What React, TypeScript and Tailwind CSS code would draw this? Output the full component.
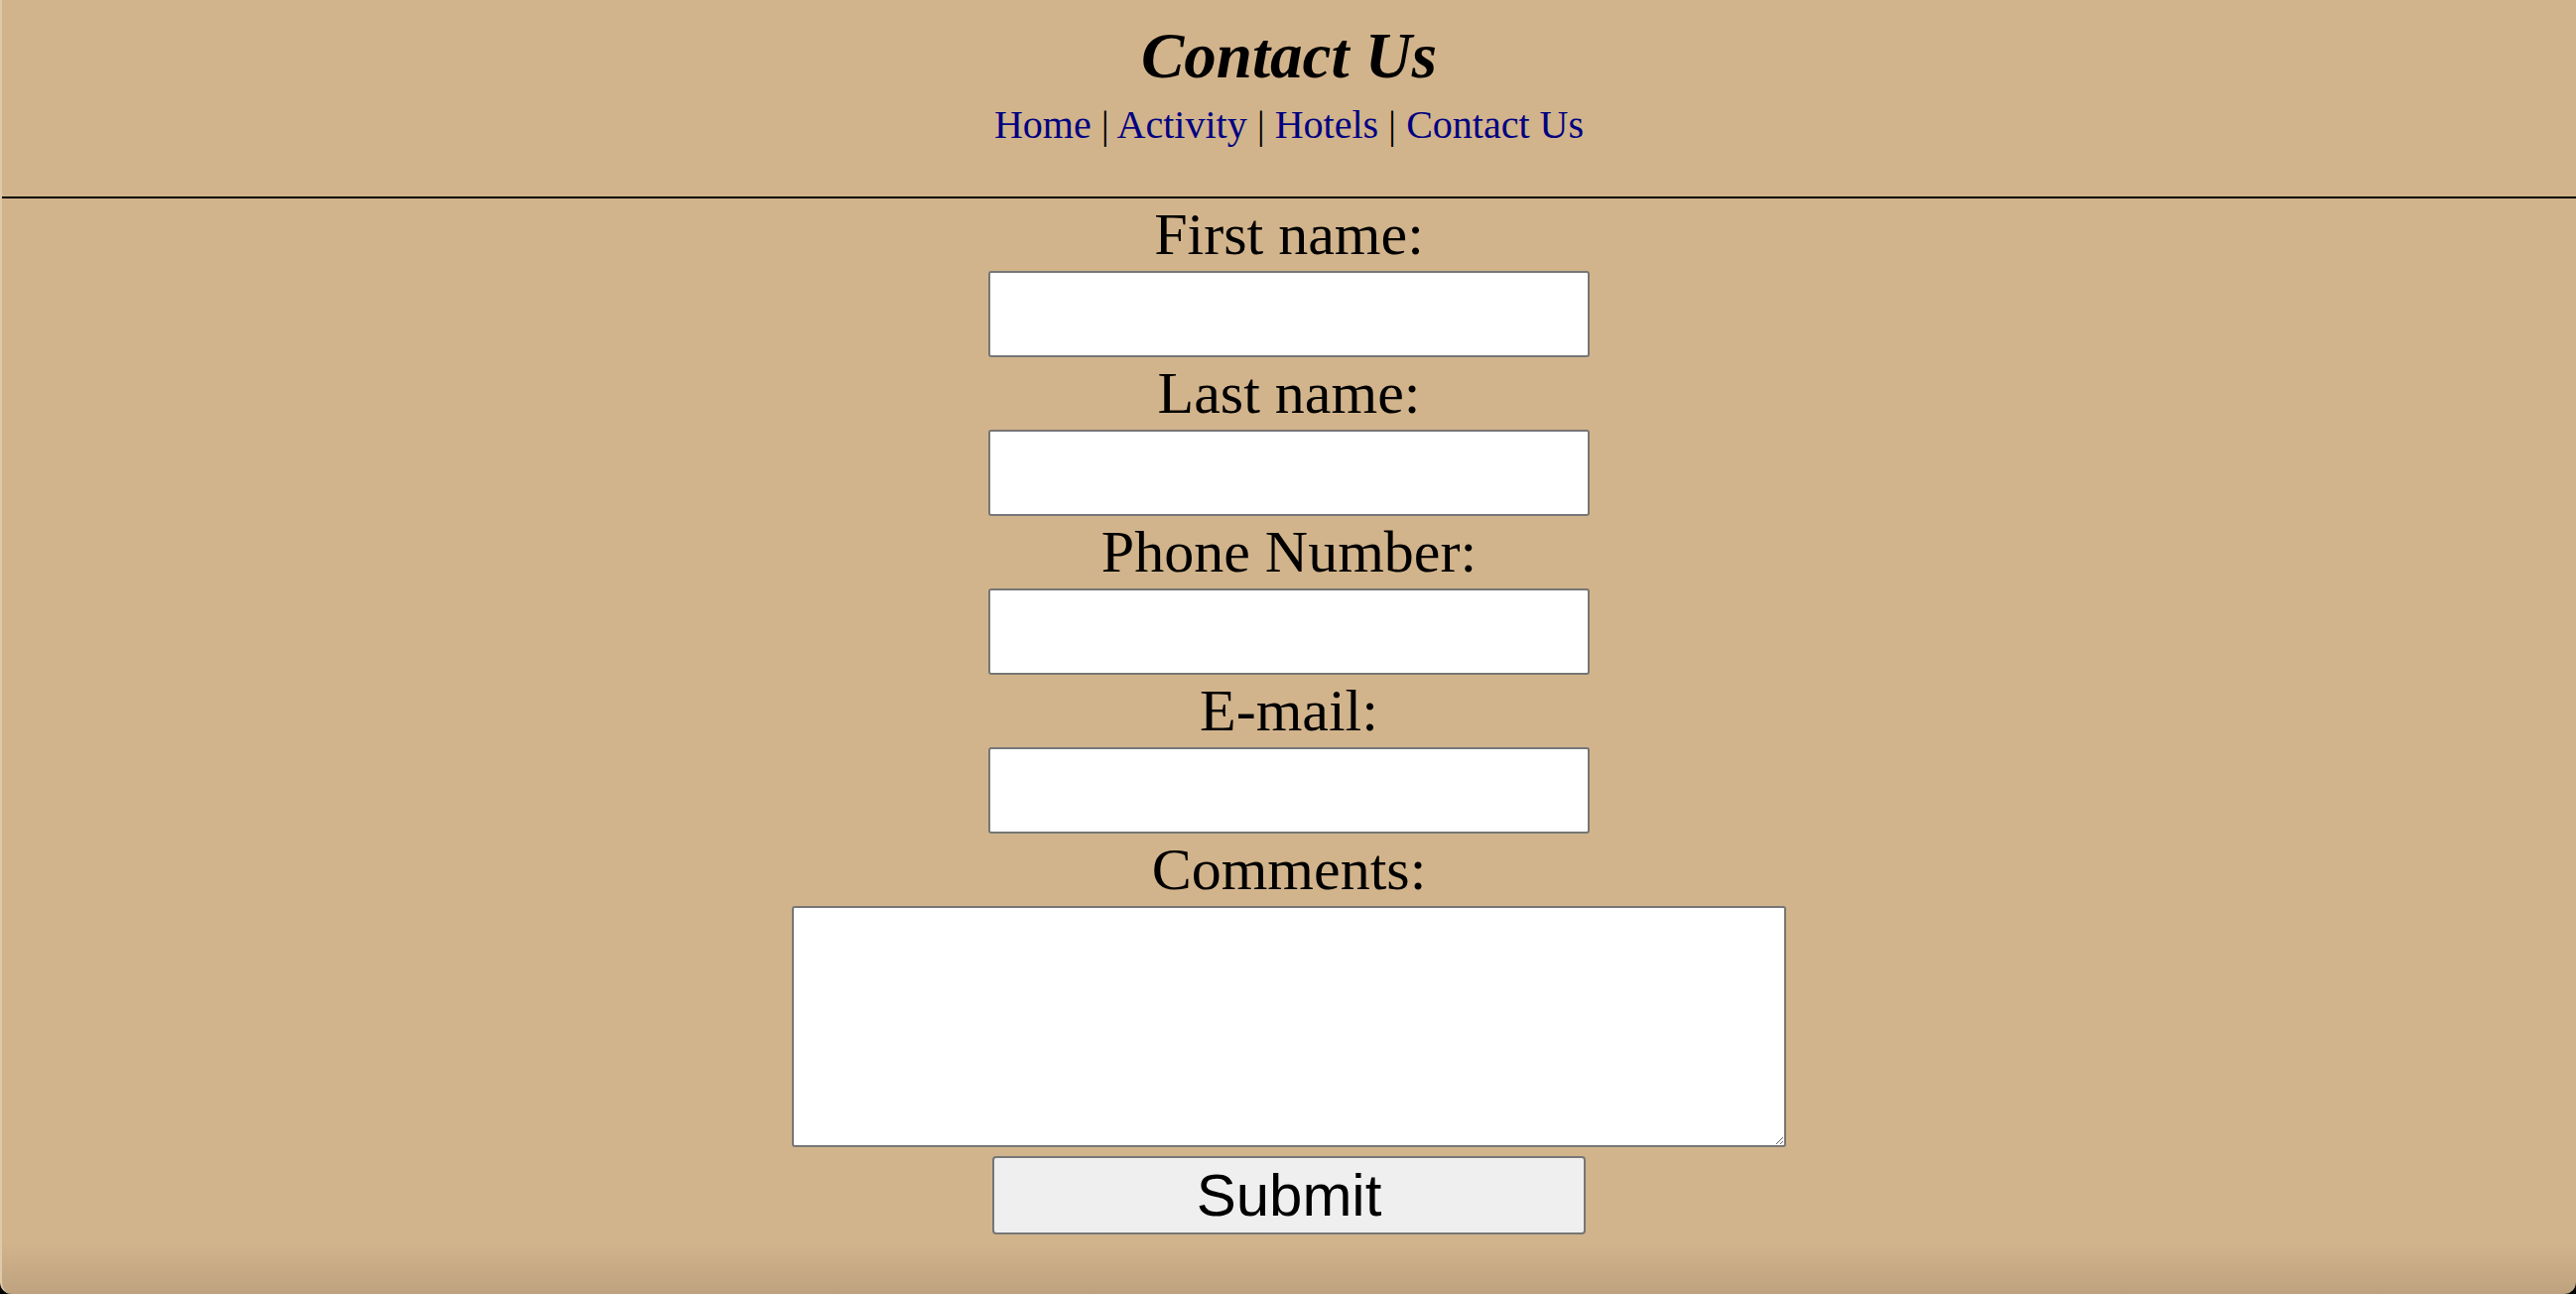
import { Fragment } from "react";

// Contact form page: tan background, centered header and stacked form fields
const navLinks = ["Home", "Activity", "Hotels", "Contact Us"];

const fields = ["First name:", "Last name:", "Phone Number:", "E-mail:"];

function Header() {
  return (
    <header className="flex flex-col items-center pt-[19px] pb-[49px] border-b-2 border-black">
      <h1 className="text-[65px] leading-[75px] font-bold italic text-black">Contact Us</h1>
      <nav className="mt-[9px] text-[40px] leading-[46px] text-black">
        {navLinks.map((link, i) => (
          <Fragment key={link}>
            {i > 0 && " | "}
            <a href="#" className="text-[#000080]">
              {link}
            </a>
          </Fragment>
        ))}
      </nav>
    </header>
  );
}

function ContactForm() {
  return (
    <form className="flex flex-col items-center" onSubmit={(e) => e.preventDefault()}>
      {fields.map((label) => (
        <Fragment key={label}>
          <label className="text-[60px] leading-[73px] text-black">{label}</label>
          <input
            type="text"
            className="w-[606px] h-[87px] bg-white border-2 border-[#767676] rounded-[3px] outline-none"
          />
        </Fragment>
      ))}

      {/* Comments */}
      <label className="text-[60px] leading-[73px] text-black">Comments:</label>
      <textarea className="block w-[1002px] h-[243px] bg-white border-2 border-[#767676] rounded-[3px] outline-none" />

      <button
        type="submit"
        className="mt-[9px] w-[598px] h-[79px] bg-[#efefef] border-2 border-[#767676] rounded-[4px] text-[60px] leading-none text-black font-['Liberation_Sans',Arial,sans-serif]"
      >
        Submit
      </button>
    </form>
  );
}

export default function App() {
  return (
    <div className="h-[1304px] bg-black">
      <div className="h-full rounded-b-[12px] border-l-2 border-[#e0c9a8] bg-linear-to-b from-[#d2b48c] from-[96%] to-[#bea27f] font-['Liberation_Serif','Times_New_Roman',serif] overflow-hidden">
        <Header />
        <ContactForm />
      </div>
    </div>
  );
}
